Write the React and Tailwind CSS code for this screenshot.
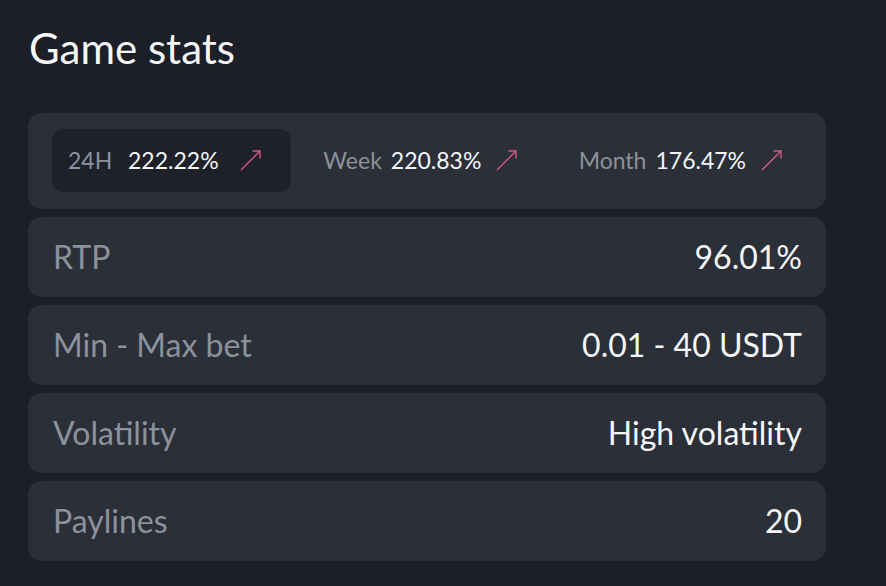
const periods = [
  { label: '24H', value: '222.22%', active: true },
  { label: 'Week', value: '220.83%' },
  { label: 'Month', value: '176.47%' },
];

const stats = [
  { label: 'RTP', value: '96.01%' },
  { label: 'Min - Max bet', value: '0.01 - 40 USDT' },
  { label: 'Volatility', value: 'High volatility' },
  { label: 'Paylines', value: '20' },
];

function TrendArrow() {
  return (
    <svg width="21" height="21" viewBox="0 0 21 21" fill="none" className="shrink-0">
      <path d="M1 20L20 1M12.5 1H20V8.5" stroke="#d45a7f" strokeWidth="1.4" />
    </svg>
  );
}

export default function App() {
  return (
    <div
      className="min-h-screen bg-[#1c1f27] px-7 pt-[27px]"
      style={{ fontFamily: 'Lato, "Open Sans", sans-serif' }}
    >
      <h1 className="text-[42px] leading-none text-[#f5f6f8] pl-[1px] mb-[44px]">Game stats</h1>

      <div className="w-[798px] flex flex-col gap-2">
        <div className="bg-[#2b2f37] rounded-[14px] px-6 pt-4 pb-[17px] flex gap-4">
          {periods.map((p) => (
            <div
              key={p.label}
              className={
                'flex-1 h-[63px] rounded-[12px] px-4 flex items-center text-[23px] ' +
                (p.active ? 'bg-[#1e2129]' : '')
              }
            >
              <span className={'text-[#8b929b] ' + (p.active ? 'min-w-[60px]' : 'mr-[9px]')}>{p.label}</span>
              <span className="text-[#f5f6f8]">{p.value}</span>
              <span className={p.active ? 'ml-[21px]' : 'ml-[15px]'}>
                <TrendArrow />
              </span>
            </div>
          ))}
        </div>

        {stats.map((s) => (
          <div
            key={s.label}
            className="bg-[#2b2f37] rounded-[14px] h-20 px-6 flex items-center justify-between text-[32px]"
          >
            <span className="text-[#8b929b] pl-[1px]">{s.label}</span>
            <span className="text-[#f5f6f8]">{s.value}</span>
          </div>
        ))}
      </div>
    </div>
  );
}
